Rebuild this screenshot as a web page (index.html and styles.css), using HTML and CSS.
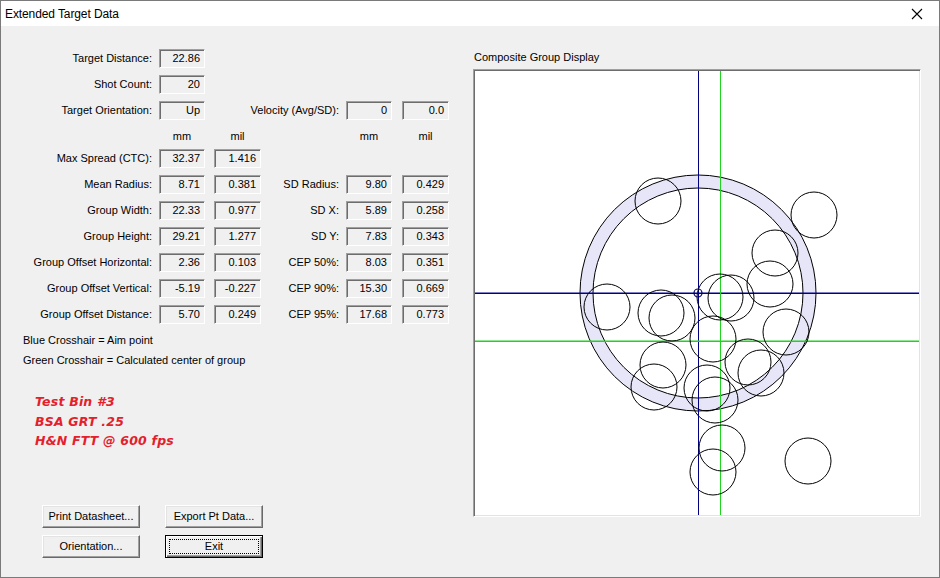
FILE: index.html
```html
<!DOCTYPE html>
<html>
<head>
<meta charset="utf-8">
<link rel="stylesheet" href="styles.css">
</head>
<body>
<div class="window">
  <div class="titlebar">
    <span class="title">Extended Target Data</span>
    <span class="close"><svg width="12" height="12" viewBox="0 0 12 12"><path d="M1 1 L11 11 M11 1 L1 11" stroke="#000" stroke-width="1.1" fill="none"/></svg></span>
  </div>
  <div class="client">
    <div class="left">
      <div class="grid">
        <span class="lbl c1">Target Distance:</span><span class="box b1">22.86</span>
        <span class="lbl c1">Shot Count:</span><span class="box b1">20</span>
        <span class="lbl c1">Target Orientation:</span><span class="box b1">Up</span>
        <span class="lbl l2">Velocity (Avg/SD):</span><span class="box b3">0</span><span class="box b4">0.0</span>
        <span class="hdr b1">mm</span><span class="hdr b2">mil</span><span class="hdr b3">mm</span><span class="hdr b4">mil</span>
        <span class="lbl c1">Max Spread (CTC):</span><span class="box b1">32.37</span><span class="box b2">1.416</span>
        <span class="lbl c1">Mean Radius:</span><span class="box b1">8.71</span><span class="box b2">0.381</span>
        <span class="lbl l2">SD Radius:</span><span class="box b3">9.80</span><span class="box b4">0.429</span>
        <span class="lbl c1">Group Width:</span><span class="box b1">22.33</span><span class="box b2">0.977</span>
        <span class="lbl l2">SD X:</span><span class="box b3">5.89</span><span class="box b4">0.258</span>
        <span class="lbl c1">Group Height:</span><span class="box b1">29.21</span><span class="box b2">1.277</span>
        <span class="lbl l2">SD Y:</span><span class="box b3">7.83</span><span class="box b4">0.343</span>
        <span class="lbl c1">Group Offset Horizontal:</span><span class="box b1">2.36</span><span class="box b2">0.103</span>
        <span class="lbl l2">CEP 50%:</span><span class="box b3">8.03</span><span class="box b4">0.351</span>
        <span class="lbl c1">Group Offset Vertical:</span><span class="box b1">-5.19</span><span class="box b2">-0.227</span>
        <span class="lbl l2">CEP 90%:</span><span class="box b3">15.30</span><span class="box b4">0.669</span>
        <span class="lbl c1">Group Offset Distance:</span><span class="box b1">5.70</span><span class="box b2">0.249</span>
        <span class="lbl l2">CEP 95%:</span><span class="box b3">17.68</span><span class="box b4">0.773</span>
      </div>
      <div class="notes">
        <div>Blue Crosshair = Aim point</div>
        <div>Green Crosshair = Calculated center of group</div>
      </div>
      <div class="memo">
        <div>Test Bin #3</div>
        <div>BSA GRT .25</div>
        <div>H&amp;N FTT @ 600 fps</div>
      </div>
      <div class="buttons">
        <button class="btn">Print Datasheet...</button>
        <button class="btn">Export Pt Data...</button>
        <button class="btn">Orientation...</button>
        <button class="btn default"><span class="focus">Exit</span></button>
      </div>
    </div>
    <div class="right">
      <div class="caption">Composite Group Display</div>
      <div class="display">
        <svg width="444" height="444" viewBox="475 71 444 444">
          <path d="M580 293 a118 118 0 1 0 236 0 a118 118 0 1 0 -236 0 Z M593 293 a105 105 0 1 0 210 0 a105 105 0 1 0 -210 0 Z" fill="#e6e6f8" fill-rule="evenodd" stroke="none"/>
          <circle cx="698" cy="293" r="118" fill="none" stroke="#000" stroke-width="1"/>
          <circle cx="698" cy="293" r="105" fill="none" stroke="#000" stroke-width="1"/>
          <rect x="698" y="71" width="1" height="444" fill="#000080"/>
          <rect x="475" y="292.5" width="444" height="1.5" fill="#000090"/>
          <rect x="720" y="71" width="1" height="444" fill="#1ed41e"/>
          <rect x="475" y="340.5" width="444" height="1.5" fill="#1ed41e"/>
          <g fill="none" stroke="#000" stroke-width="1">
            <circle cx="658" cy="201" r="23"/>
            <circle cx="814" cy="215" r="23"/>
            <circle cx="775" cy="253" r="23"/>
            <circle cx="770" cy="284" r="23"/>
            <circle cx="607" cy="307" r="23"/>
            <circle cx="720" cy="297" r="23"/>
            <circle cx="731" cy="298" r="23"/>
            <circle cx="661" cy="313" r="23"/>
            <circle cx="672" cy="318" r="23"/>
            <circle cx="713" cy="339" r="23"/>
            <circle cx="786" cy="332" r="23"/>
            <circle cx="663" cy="365" r="23"/>
            <circle cx="654" cy="387" r="23"/>
            <circle cx="748" cy="362" r="23"/>
            <circle cx="761" cy="373" r="23"/>
            <circle cx="707" cy="388" r="23"/>
            <circle cx="715" cy="400" r="23"/>
            <circle cx="722" cy="448" r="23"/>
            <circle cx="713" cy="472" r="23"/>
            <circle cx="808" cy="461" r="23"/>
          </g>
          <circle cx="698" cy="293" r="4" fill="none" stroke="#000060" stroke-width="1.2"/>
        </svg>
      </div>
    </div>
  </div>
</div>
</body>
</html>
```
FILE: styles.css
```css
html, body {
  margin: 0;
  padding: 0;
  background: #f0f0f0;
}
.window {
  width: 940px;
  height: 578px;
  box-sizing: border-box;
  border: 1px solid #7a7a7a;
  background: #f0f0f0;
  font-family: "Liberation Sans", Arial, sans-serif;
  font-size: 11px;
  color: #000;
  overflow: hidden;
}
.titlebar {
  height: 25px;
  background: #fff;
  display: flex;
  align-items: center;
  justify-content: space-between;
}
.title {
  padding-left: 4px;
  font-size: 12px;
  letter-spacing: -0.1px;
}
.close {
  display: flex;
  width: 46px;
  height: 25px;
  align-items: center;
  justify-content: center;
  margin-right: -1px;
}
.client {
  display: flex;
  height: 551px;
}
.left {
  width: 472px;
  padding-top: 20px;
  box-sizing: border-box;
}
.grid {
  display: grid;
  grid-template-columns: 151px 7px 46px 9px 47px 78px 7px 46px 10px 47px;
  grid-template-rows: 26px 26px 26px 22px 26px 26px 26px 26px 26px 26px 26px;
}
.c1 { grid-column: 1; }
.b1 { grid-column: 3; }
.b2 { grid-column: 5; }
.l2 { grid-column: 6; justify-self: end; }
.b3 { grid-column: 8; }
.b4 { grid-column: 10; }
.lbl {
  text-align: right;
  line-height: 24px;
  white-space: nowrap;
}
.box {
  align-self: start;
  margin-top: 3px;
  height: 19px;
  box-sizing: border-box;
  border-style: solid;
  border-width: 1px;
  border-color: #a0a0a0 #ffffff #ffffff #a0a0a0;
  box-shadow: inset 1px 1px 0 #6d6d6d;
  text-align: right;
  padding-right: 4px;
  line-height: 17px;
}
.hdr {
  text-align: center;
  padding-top: 6px;
  line-height: 13px;
}
.notes {
  margin-top: 2px;
  padding-left: 22px;
  line-height: 20px;
}
.memo {
  margin-top: 22px;
  padding-left: 34px;
  color: #e4202c;
  font-family: "Comic Sans MS", "DejaVu Sans", sans-serif;
  font-weight: bold;
  font-style: italic;
  font-size: 12.5px;
  letter-spacing: 0.2px;
  line-height: 19.5px;
}
.buttons {
  margin-top: 54px;
  margin-left: 41px;
  display: grid;
  grid-template-columns: 98px 98px;
  grid-template-rows: 23px 23px;
  column-gap: 25px;
  row-gap: 7px;
}
.btn {
  font-family: "Liberation Sans", Arial, sans-serif;
  font-size: 11px;
  color: #000;
  background: #f0f0f0;
  margin: 0;
  padding: 0;
  box-sizing: border-box;
  border-style: solid;
  border-width: 1px;
  border-color: #ffffff #696969 #696969 #ffffff;
  box-shadow: inset -1px -1px 0 #a0a0a0, inset 1px 1px 0 #e3e3e3;
}
.btn.default {
  border: 1px solid #000;
  box-shadow: inset 1px 1px 0 #ffffff, inset -1px -1px 0 #696969, inset -2px -2px 0 #a0a0a0;
  padding: 3px;
  display: flex;
}
.focus {
  flex: 1;
  border: 1px dotted #000;
  display: flex;
  align-items: center;
  justify-content: center;
}
.right {
  width: 448px;
  padding-top: 24px;
}
.caption {
  line-height: 14px;
  padding-left: 1px;
  margin-bottom: 5px;
}
.display {
  width: 448px;
  height: 448px;
  box-sizing: border-box;
  border-style: solid;
  border-width: 1px;
  border-color: #a0a0a0 #ffffff #ffffff #a0a0a0;
  box-shadow: inset 1px 1px 0 #6d6d6d, inset -1px -1px 0 #e3e3e3;
  background: #fff;
  padding: 1px;
}
.display svg {
  display: block;
}
```
